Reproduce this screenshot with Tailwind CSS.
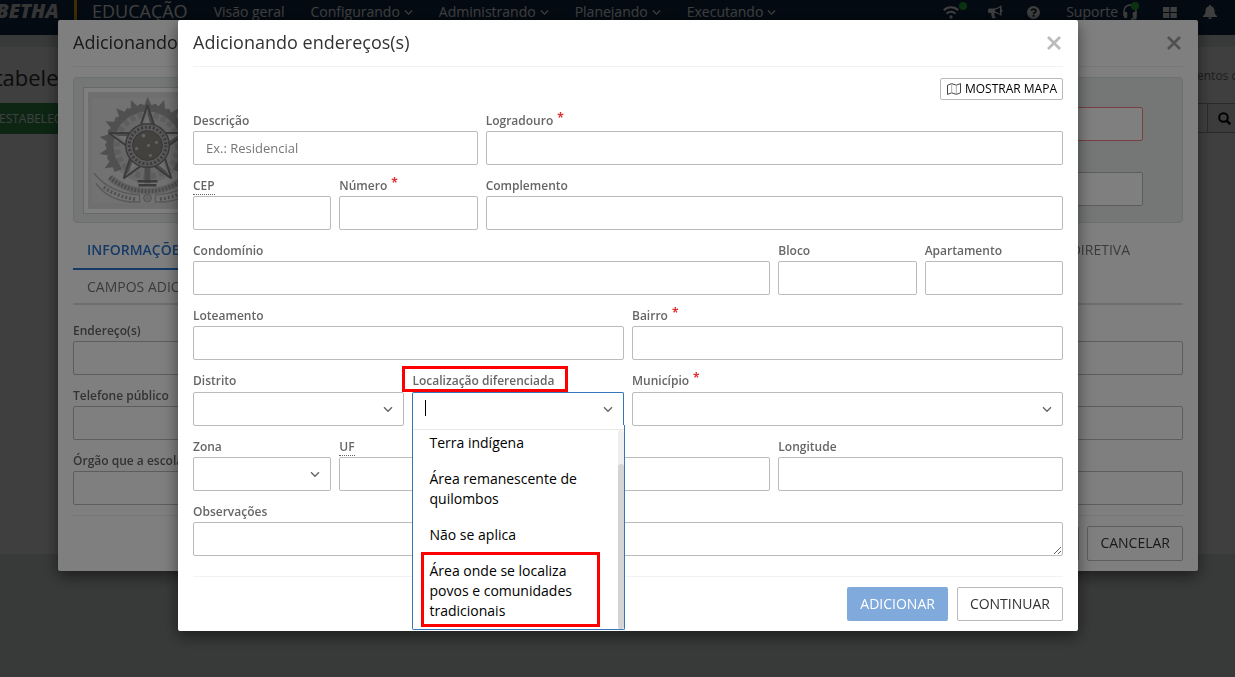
<!DOCTYPE html>
<html lang="pt-BR">
<head>
<meta charset="utf-8">
<meta name="viewport" content="width=device-width, initial-scale=1">
<title>Educação - Adicionando endereços</title>
<script src="https://cdn.jsdelivr.net/npm/@tailwindcss/browser@4"></script>
</head>
<body class="h-screen overflow-hidden bg-[#e1e4e6] font-['Open_Sans','Noto_Sans',sans-serif] text-sm text-[#333]">

<svg class="hidden" aria-hidden="true">
  <symbol id="chev" viewBox="0 0 10 7"><path d="M1 1.3l4 4 4-4" fill="none" stroke="currentColor" stroke-width="1.400"/></symbol>
  <symbol id="close" viewBox="0 0 14 14"><path d="M1 1l12 12M13 1L1 13" fill="none" stroke="currentColor" stroke-width="2.700"/></symbol>
</svg>

<!-- Page -->
<header class="flex h-[35px] items-start overflow-hidden bg-[#0f2a4a] pr-[18px] leading-6 text-white">
  <span class="-ml-1 w-[78px] text-xl leading-[22px] font-extrabold italic text-[#d4d4d4]">BETHA</span>
  <span class="h-5 w-[3px] bg-[#ffb800]"></span>
  <span class="ml-[15px] text-lg leading-[22px]">EDUCAÇÃO</span>
  <nav class="ml-[26px] flex gap-[26px]">
    <a href="#">Visão geral</a>
    <a href="#" class="flex items-center gap-1">Configurando<svg class="h-[7px] w-[9px]"><use href="#chev"/></svg></a>
    <a href="#" class="flex items-center gap-1">Administrando<svg class="h-[7px] w-[9px]"><use href="#chev"/></svg></a>
    <a href="#" class="flex items-center gap-1">Planejando<svg class="h-[7px] w-[9px]"><use href="#chev"/></svg></a>
    <a href="#" class="flex items-center gap-1">Executando<svg class="h-[7px] w-[9px]"><use href="#chev"/></svg></a>
  </nav>
  <div class="ml-auto flex h-6 items-center gap-[26px]">
    <a href="#" aria-label="Conexão" class="relative mr-[3px]">
      <svg class="h-4 w-4" viewBox="0 0 16 16" fill="none" stroke="currentColor" stroke-width="2"><path d="M.8 6.3a10.300 10.300 0 0 1 14.400 0M3.500 9.600a6.300 6.300 0 0 1 9 0"/><circle cx="8" cy="13" r="1.700" fill="currentColor" stroke="none"/></svg>
      <span class="absolute -top-0.5 left-4 size-2 rounded-full bg-[#28c840]"></span>
    </a>
    <a href="#" aria-label="Novidades" class="-mr-0.5"><svg class="h-[14px] w-[15px]" viewBox="0 0 15 14" fill="currentColor"><path d="M13.500 0v4.200c1.400.5 1.400 2.400 0 2.900V11c-2.500-2-4.500-2.900-6.800-3.100-.8.600-.6 1.500 0 2.100-.5.900.2 1.500 1.200 2.300-.7 1.400-3 1.300-3.800.5C3.600 11 3 9.700 3.400 7.900H1.600C.6 7.900 0 7.200 0 6.400V4.900c0-.9.700-1.500 1.500-1.500h4.700C8.700 3.200 11 2.200 13.500 0zM12 2.400C10.400 3.500 8.800 4.200 7.200 4.500v2.300c1.700.3 3.300 1 4.800 2.100z"/></svg></a>
    <a href="#" aria-label="Ajuda"><svg class="size-[13px]" viewBox="0 0 13 13"><circle cx="6.500" cy="6.500" r="6.500" fill="currentColor"/><path d="M4.400 4.800c.2-2.300 4.400-2.300 4.400.1 0 1.500-2.200 1.500-2.200 3" fill="none" stroke="#0f2a4a" stroke-width="1.800"/><rect x="5.600" y="8.800" width="2" height="1.900" fill="#0f2a4a"/></svg></a>
    <a href="#" class="relative flex items-center gap-[5px]">Suporte
      <svg class="h-4 w-[14px]" viewBox="0 0 14 16" fill="none" stroke="currentColor" stroke-width="1.500"><path d="M1 12V7a6 6 0 0 1 12 0v6c0 1.300-.8 2-2 2H8"/><path d="M1.500 8.500h2.300v5H1.500zM10.200 8.500h2.300v5h-2.300z" fill="currentColor" stroke-width="1"/></svg>
      <span class="absolute top-0.5 -right-0.5 size-2 rounded-full bg-[#28c840]"></span>
    </a>
    <a href="#" aria-label="Aplicativos"><svg class="h-[11px] w-[14px]" viewBox="0 0 14 11" fill="currentColor"><path d="M0 0h6.300v5H0zM7.500 0h6.300v5H7.500zM0 6h6.300v5H0zM7.500 6h6.300v5H7.500z"/></svg></a>
    <a href="#" aria-label="Notificações"><svg class="h-[14px] w-[14px]" viewBox="0 0 14 14" fill="currentColor"><path d="M6.200 0h1.600v1.200c2.400.4 3.700 2.100 3.700 4.600 0 2.700.7 4.200 2.500 5.200v.9H0V11c1.800-1 2.500-2.500 2.500-5.200 0-2.500 1.300-4.200 3.700-4.600zM5.200 12.400h3.600C8.700 14.500 5.300 14.500 5.200 12.400z"/></svg></a>
  </div>
</header>
<main class="mt-3 flex h-[507px] items-start justify-between overflow-hidden bg-white">
  <div class="-ml-[30px] pt-3">
    <h1 class="pl-0.5 text-[22px] leading-9">Estabelecimentos</h1>
    <button class="mt-2 h-[31px] bg-[#349a50] pl-[29px] pr-3 text-xs text-white">ESTABELECIMENTO</button>
  </div>
  <div class="pt-5">
    <p class="w-[38px] text-xs leading-[18px] whitespace-nowrap text-[#777]">entos c</p>
    <div class="mt-[18px] flex h-[30px] justify-end">
      <input aria-label="Pesquisar" class="-ml-40 w-40 border border-[#aaa] bg-white">
      <button aria-label="Buscar" class="flex w-[27px] items-center justify-center border-y border-[#aaa] bg-[#f0f0f0] pl-1.5 text-black"><svg class="size-[13px]" viewBox="0 0 13 13" fill="none" stroke="currentColor" stroke-width="2"><circle cx="5.500" cy="5.500" r="4.300"/><path d="M8.600 8.600l3.600 3.600" stroke-width="2.500"/></svg></button>
    </div>
  </div>
</main>

<!-- First dialog -->
<div class="fixed inset-0 flex items-start justify-center bg-black/50 pt-5 pl-[21px]">
  <section class="w-full max-w-[1140px] rounded-xs bg-white px-[15px] pb-[10px] shadow-[0_5px_15px_rgba(0,0,0,0.5)]">
    <div class="flex h-[47px] items-center justify-between border-b border-[#eee]">
      <h2 class="pb-0.5 text-lg">Adicionando</h2>
      <button aria-label="Fechar cadastro" class="mr-0.5 text-[#a0a0a0]"><svg class="size-[14px]"><use href="#close"/></svg></button>
    </div>
    <div class="mt-[10px] flex justify-between rounded border border-[#d9e0de] bg-[#e8eeec] pt-[9px] pr-[39px] pb-2 pl-[9px]">
      <div class="border border-[#ccd2d0] bg-white p-1">
        <svg class="size-[117px]" viewBox="0 0 118 118" aria-label="Brasão da República">
          <defs>
            <path id="leaf" d="M-9 -34L-8 -42 -3 -41 0 -49 4 -41 9 -42 9 -34z"/>
            <g id="ray"><path d="M0 -41L9 -12 0 0z" fill="#999"/><path d="M0 -41L-9 -12 0 0z" fill="#d2d2d2"/><path d="M0 -41L9.500 -12M0 -41L-9.500 -12" stroke="#777" stroke-width="2" fill="none"/><path d="M0 -31L4 -18H-4z" fill="#e2e2e2"/></g>
          </defs>
          <rect width="118" height="118" fill="#dedede"/>
          <rect x="4" y="6" width="110" height="106" fill="#e5e5e5"/>
          <g transform="translate(60 54)">
            <circle r="38" fill="#d0d0d0"/>
            <g fill="#a0a0a0"><use href="#leaf"/><use href="#leaf" transform="rotate(20)"/><use href="#leaf" transform="rotate(40)"/><use href="#leaf" transform="rotate(60)"/><use href="#leaf" transform="rotate(80)"/><use href="#leaf" transform="rotate(100)"/><use href="#leaf" transform="rotate(118)"/><use href="#leaf" transform="rotate(-20)"/><use href="#leaf" transform="rotate(-40)"/><use href="#leaf" transform="rotate(-60)"/><use href="#leaf" transform="rotate(-80)"/><use href="#leaf" transform="rotate(-100)"/><use href="#leaf" transform="rotate(-118)"/></g>
            <circle r="31" fill="none" stroke="#bdbdbd" stroke-width="6" stroke-dasharray="5 3"/>
            <path d="M-3 20h6v18h-6z" fill="#999"/><path d="M-10 36h20M-9 40h18" stroke="#777" stroke-width="2.500"/>
            <use href="#ray"/><use href="#ray" transform="rotate(72)"/><use href="#ray" transform="rotate(144)"/><use href="#ray" transform="rotate(216)"/><use href="#ray" transform="rotate(288)"/>
            <circle r="22" fill="#b5b5b5" stroke="#777" stroke-width="1.500"/>
            <circle r="18.500" fill="none" stroke="#777" stroke-width="3" stroke-dasharray="2 2"/>
            <circle r="15" fill="#86847f" stroke="#6d6b66"/>
            <g fill="#c9c9c9"><circle cx="-4" cy="-10" r="1.800"/><circle cx="9" cy="-3" r="1.500"/><circle cx="1" cy="0" r="1.500"/><circle cx="-11" cy="3" r="1.600"/><circle cx="3" cy="10" r="1.500"/></g>
            <g fill="none" stroke="#b5b5b5"><path d="M-54 28Q-38 48 -8 50V57Q-38 58 -52 38M54 28Q38 48 8 50V57Q38 58 52 38" stroke-width="1.500"/><path d="M-38 32Q-22 46 0 46 22 46 38 32" stroke="#c6c6c6" stroke-width="7"/><path d="M-38 32Q-22 46 0 46 22 46 38 32" stroke="#999" stroke-width="4" stroke-dasharray="2 1.500"/><path d="M-44 42Q-30 52 -12 54M44 42Q30 52 12 54" stroke="#a0a0a0" stroke-width="3.500" stroke-dasharray="2 2"/></g>
            <circle cy="53" r="4" fill="#ccc" stroke="#aaa"/>
          </g>
        </svg>
      </div>
      <div class="flex w-1/2 flex-col gap-[31px] pt-5 pb-1.5">
        <input aria-label="Nome" class="h-[34px] rounded-xs border border-[#f08080] bg-white px-3">
        <input aria-label="Código" class="h-[34px] rounded-xs border border-[#bbb] bg-white px-3">
      </div>
    </div>
    <div class="mt-[9px] flex flex-wrap justify-between">
      <button class="h-[38px] border-b-2 border-[#2d74cc] px-[14px] font-semibold text-[#2d74cc]">INFORMAÇÕES</button>
      <button class="mr-[39px] h-[38px] border-b-2 border-transparent px-[14px] text-[#777]">DIRETIVA</button>
      <div class="w-full border-b-2 border-[#ddd]"><button class="h-[33px] px-[14px] text-[#777]">CAMPOS ADICIONAIS</button></div>
    </div>
    <div class="mt-4 grid gap-[11px] text-xs font-semibold text-[#666]">
      <label class="grid leading-5">Endereço(s)<input class="h-[34px] rounded-xs border border-[#bbb] px-3"></label>
      <label class="grid leading-5">Telefone público<input class="h-[34px] rounded-xs border border-[#bbb] px-3"></label>
      <label class="grid leading-5">Órgão que a escola<input class="h-[34px] rounded-xs border border-[#bbb] px-3"></label>
    </div>
    <div class="mt-[10px] flex justify-end gap-2 border-t border-[#eee] pt-[10px]">
      <button aria-label="Salvar" class="h-[35px] w-24 rounded-xs border border-[#bbb]"></button>
      <button class="h-[35px] rounded-xs border border-[#bbb] px-3 pb-0.5">CANCELAR</button>
    </div>
  </section>
</div>

<!-- Address dialog -->
<div class="fixed inset-0 flex items-start justify-center bg-black/50 pt-5 pl-[21px]">
  <section role="dialog" aria-labelledby="dlg-title" class="w-full max-w-[900px] rounded-xs bg-white px-[15px] pb-[10px] shadow-[0_5px_15px_rgba(0,0,0,0.5)]">
    <div class="flex h-[47px] items-center justify-between border-b border-[#f2f2f2]">
      <h2 id="dlg-title" class="pb-0.5 text-lg">Adicionando endereços(s)</h2>
      <button aria-label="Fechar" class="mr-0.5 text-[#bbb]"><svg class="size-[14px]"><use href="#close"/></svg></button>
    </div>
    <div class="flex justify-end pt-[11px]">
      <button class="flex h-[22px] items-center gap-1 rounded-xs border border-[#bbb] px-[5px] text-xs text-black">
        <svg class="ml-px h-3 w-[14px]" viewBox="0 0 14 12" fill="none" stroke="#444" stroke-width="1"><path d="M.5 2.200L4.700.6l4.600 1.600L13.500.6v9.200l-4.200 1.600-4.600-1.600L.5 11.400z"/><path d="M4.700.6v9.200M9.300 2.200v9.200" stroke="#aaa"/></svg>
        MOSTRAR MAPA
      </button>
    </div>
    <form class="mt-[11px] grid grid-cols-12 gap-x-2 gap-y-[11px] text-xs font-semibold text-[#666]">
      <div class="col-span-4"><label for="f1" class="block h-5 leading-5">Descrição</label><input id="f1" placeholder="Ex.: Residencial" class="block h-[34px] w-full rounded-xs border border-[#bbb] px-3 text-[13px] font-normal placeholder:text-[#777]"></div>
      <div class="col-span-8"><label for="f2" class="flex h-5 gap-1 leading-5">Logradouro<span class="leading-[14px] font-bold text-[#e03131]">*</span></label><input id="f2" class="block h-[34px] w-full rounded-xs border border-[#bbb] px-3"></div>

      <div class="col-span-2"><label for="f3" class="block h-5 leading-5"><abbr class="border-b border-dotted border-[#666]">CEP</abbr></label><input id="f3" class="block h-[34px] w-full rounded-xs border border-[#bbb] px-3"></div>
      <div class="col-span-2"><label for="f4" class="flex h-5 gap-1 leading-5">Número<span class="leading-[14px] font-bold text-[#e03131]">*</span></label><input id="f4" class="block h-[34px] w-full rounded-xs border border-[#bbb] px-3"></div>
      <div class="col-span-8"><label for="f5" class="block h-5 leading-5">Complemento</label><input id="f5" class="block h-[34px] w-full rounded-xs border border-[#bbb] px-3"></div>

      <div class="col-span-8"><label for="f6" class="block h-5 leading-5">Condomínio</label><input id="f6" class="block h-[34px] w-full rounded-xs border border-[#bbb] px-3"></div>
      <div class="col-span-2"><label for="f7" class="block h-5 leading-5">Bloco</label><input id="f7" class="block h-[34px] w-full rounded-xs border border-[#bbb] px-3"></div>
      <div class="col-span-2"><label for="f8" class="block h-5 leading-5">Apartamento</label><input id="f8" class="block h-[34px] w-full rounded-xs border border-[#bbb] px-3"></div>

      <div class="col-span-6"><label for="f9" class="block h-5 leading-5">Loteamento</label><input id="f9" class="block h-[34px] w-full rounded-xs border border-[#bbb] px-3"></div>
      <div class="col-span-6"><label for="f10" class="flex h-5 gap-1 leading-5">Bairro<span class="leading-[14px] font-bold text-[#e03131]">*</span></label><input id="f10" class="block h-[34px] w-full rounded-xs border border-[#bbb] px-3"></div>

      <div class="col-span-3"><label for="f11" class="mb-px block h-5 leading-5">Distrito</label>
        <div class="relative"><select id="f11" class="block h-[34px] w-full appearance-none rounded-xs border border-[#bbb] px-3"></select><svg class="pointer-events-none absolute top-[14px] right-[11px] h-[7px] w-[10px]"><use href="#chev"/></svg></div></div>
      <div class="relative z-10 col-span-3"><label for="f12" class="mb-px block h-5 leading-5">Localização diferenciada</label>
        <span class="pointer-events-none absolute -top-[5px] -left-[10px] h-[26px] w-[166px] border-3 border-[#f00]"></span>
        <div class="relative">
          <input id="f12" role="combobox" aria-expanded="true" aria-controls="opts" class="block h-[34px] w-full rounded-t-xs border border-b-0 border-[#3575bb] bg-white px-3 text-sm font-normal">
          <span class="absolute top-2 left-[13px] h-4 w-px bg-black"></span>
          <svg class="pointer-events-none absolute top-[14px] right-[11px] h-[7px] w-[10px]"><use href="#chev"/></svg>
          <div class="absolute top-[33px] -right-px left-0 rounded-b-xs border border-t-0 border-[#3575bb] bg-white">
            <ul id="opts" role="listbox" aria-label="Localização diferenciada" class="text-sm leading-5 font-normal text-black">
              <li role="option" class="px-4 py-2">Terra indígena</li>
              <li role="option" class="px-4 py-2">Área remanescente de quilombos</li>
              <li role="option" class="px-4 py-2">Não se aplica</li>
              <li role="option" class="py-2 pr-8 pl-4">Área onde se localiza povos e comunidades tradicionais</li>
            </ul>
            <span class="absolute inset-x-0 top-1 h-px bg-[#e8e8e8]"></span>
            <span class="absolute top-[5px] right-0 bottom-0 w-1.5 rounded-t bg-[#eee]"></span>
            <span class="absolute top-[39px] right-0 bottom-0 w-1.5 rounded bg-[#d4d4d4]"></span>
            <span class="pointer-events-none absolute bottom-0.5 left-2 h-[75px] w-[179px] border-3 border-[#f00]"></span>
          </div>
        </div></div>
      <div class="col-span-6"><label for="f13" class="mb-px flex h-5 gap-1 leading-5">Município<span class="leading-[14px] font-bold text-[#e03131]">*</span></label>
        <div class="relative"><select id="f13" class="block h-[34px] w-full appearance-none rounded-xs border border-[#bbb] px-3"></select><svg class="pointer-events-none absolute top-[14px] right-[11px] h-[7px] w-[10px]"><use href="#chev"/></svg></div></div>

      <div class="col-span-2"><label for="f14" class="block h-5 leading-5">Zona</label>
        <div class="relative"><select id="f14" class="block h-[34px] w-full appearance-none rounded-xs border border-[#bbb] px-3"></select><svg class="pointer-events-none absolute top-[14px] right-[11px] h-[7px] w-[10px]"><use href="#chev"/></svg></div></div>
      <div class="col-span-2"><label for="f15" class="block h-5 leading-5"><abbr class="border-b border-dotted border-[#666]">UF</abbr></label><input id="f15" class="block h-[34px] w-full rounded-xs border border-[#bbb] px-3"></div>
      <div class="col-span-4 pt-5"><input aria-label="Latitude" class="block h-[34px] w-full rounded-xs border border-[#bbb] px-3"></div>
      <div class="col-span-4"><label for="f17" class="block h-5 leading-5">Longitude</label><input id="f17" class="block h-[34px] w-full rounded-xs border border-[#bbb] px-3"></div>

      <div class="col-span-12"><label for="f18" class="block h-5 leading-5">Observações</label><textarea id="f18" rows="1" class="block h-[34px] w-full resize-y overflow-hidden rounded-xs border border-[#bbb] px-3 py-1.5"></textarea></div>
    </form>
    <div class="mt-5 flex justify-end gap-[9px] border-t border-[#f2f2f6] pt-[10px]">
      <button class="h-[34px] rounded-xs bg-[#80aadc] px-[13px] font-medium text-white">ADICIONAR</button>
      <button class="h-[34px] rounded-xs border border-[#bbb] px-3">CONTINUAR</button>
    </div>
  </section>
</div>
</body>
</html>
